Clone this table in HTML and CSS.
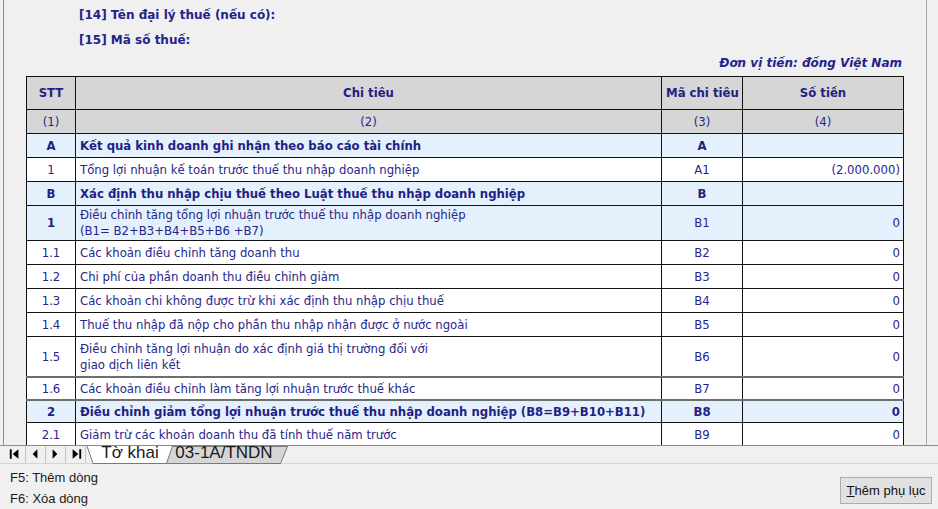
FILE: index.html
```html
<!DOCTYPE html>
<html lang="vi">
<head>
<meta charset="utf-8">
<title>03-1A/TNDN</title>
<link rel="stylesheet" href="styles.css">
</head>
<body>
<div class="app">
  <div class="pane">
    <div class="content">
      <div class="info">
        <div class="info-line">[14] Tên đại lý thuế (nếu có):</div>
        <div class="info-line">[15] Mã số thuế:</div>
      </div>
      <div class="unit">Đơn vị tiền: đồng Việt Nam</div>
      <table class="sheet">
        <colgroup>
          <col class="c-stt"><col class="c-name"><col class="c-code"><col class="c-val">
        </colgroup>
        <tr class="r-head">
          <th>STT</th><th>Chi tiêu</th><th>Mã chi tiêu</th><th>Số tiền</th>
        </tr>
        <tr class="r-idx">
          <td class="ctr">(1)</td><td class="ctr">(2)</td><td class="ctr">(3)</td><td class="ctr">(4)</td>
        </tr>
        <tr class="r-sec bold">
          <td class="ctr">A</td><td>Kết quả kinh doanh ghi nhận theo báo cáo tài chính</td><td class="ctr">A</td><td class="num"></td>
        </tr>
        <tr>
          <td class="ctr">1</td><td>Tổng lợi nhuận kế toán trước thuế thu nhập doanh nghiệp</td><td class="ctr">A1</td><td class="num">(2.000.000)</td>
        </tr>
        <tr class="r-sec bold">
          <td class="ctr">B</td><td>Xác định thu nhập chịu thuế theo Luật thuế thu nhập doanh nghiệp</td><td class="ctr">B</td><td class="num"></td>
        </tr>
        <tr class="r-sec r-two">
          <td class="ctr b">1</td><td class="wrap">Điều chỉnh tăng tổng lợi nhuận trước thuế thu nhập doanh nghiệp<br>(B1= B2+B3+B4+B5+B6 +B7)</td><td class="ctr">B1</td><td class="num">0</td>
        </tr>
        <tr>
          <td class="ctr">1.1</td><td>Các khoản điều chỉnh tăng doanh thu</td><td class="ctr">B2</td><td class="num">0</td>
        </tr>
        <tr>
          <td class="ctr">1.2</td><td>Chi phí của phần doanh thu điều chỉnh giảm</td><td class="ctr">B3</td><td class="num">0</td>
        </tr>
        <tr>
          <td class="ctr">1.3</td><td>Các khoản chi không được trừ khi xác định thu nhập chịu thuế</td><td class="ctr">B4</td><td class="num">0</td>
        </tr>
        <tr>
          <td class="ctr">1.4</td><td>Thuế thu nhập đã nộp cho phần thu nhập nhận được ở nước ngoài</td><td class="ctr">B5</td><td class="num">0</td>
        </tr>
        <tr class="r-three">
          <td class="ctr">1.5</td><td class="wrap">Điều chỉnh tăng lợi nhuận do xác định giá thị trường đối với<br>giao dịch liên kết</td><td class="ctr">B6</td><td class="num">0</td>
        </tr>
        <tr class="r-thin r-gray">
          <td class="ctr">1.6</td><td>Các khoản điều chỉnh làm tăng lợi nhuận trước thuế khác</td><td class="ctr">B7</td><td class="num">0</td>
        </tr>
        <tr class="r-sec bold r-thin r-gray">
          <td class="ctr">2</td><td>Điều chỉnh giảm tổng lợi nhuận trước thuế thu nhập doanh nghiệp (B8=B9+B10+B11)</td><td class="ctr">B8</td><td class="num">0</td>
        </tr>
        <tr>
          <td class="ctr">2.1</td><td>Giảm trừ các khoản doanh thu đã tính thuế năm trước</td><td class="ctr">B9</td><td class="num">0</td>
        </tr>
      </table>
    </div>
  </div>

  <div class="tabbar">
    <div class="nav">
      <span class="nav-btn"><svg width="20" height="17" viewBox="0 0 20 17"><rect x="4" y="3" width="2" height="10" fill="#000"/><polygon points="13,3 13,13 7,8" fill="#000"/></svg></span>
      <span class="nav-btn"><svg width="20" height="17" viewBox="0 0 20 17"><polygon points="12,3 12,13 7,8" fill="#000"/></svg></span>
      <span class="nav-btn"><svg width="20" height="17" viewBox="0 0 20 17"><polygon points="7,3 7,13 12,8" fill="#000"/></svg></span>
      <span class="nav-btn"><svg width="20" height="17" viewBox="0 0 20 17"><polygon points="7,3 7,13 13,8" fill="#000"/><rect x="14" y="3" width="2" height="10" fill="#000"/></svg></span>
    </div>
    <div class="tabs">
      <div class="tab tab-active">
        <svg class="tab-shape" width="86" height="18" viewBox="0 0 86 18"><polygon points="0,0 85.5,0 79.5,17.5 6,17.5" fill="#ffffff"/><polyline points="0,0 6,17.5 79.5,17.5 85.5,0" fill="none" stroke="#7a7a7a" stroke-width="1"/></svg>
        <span class="tab-label">Tờ khai</span>
      </div>
      <div class="tab tab-idle">
        <svg class="tab-shape" width="128" height="18" viewBox="0 0 128 18"><polygon points="0,0.5 127.5,0.5 120.5,17.5 6.5,17.5" fill="#d6d6d6" stroke="#7a7a7a" stroke-width="1"/></svg>
        <span class="tab-label">03-1A/TNDN</span>
      </div>
    </div>
  </div>

  <div class="footer">
    <div class="hints">
      <div>F5: Thêm dòng</div>
      <div>F6: Xóa dòng</div>
    </div>
    <button class="btn" type="button"><u>T</u>hêm phụ lục</button>
  </div>
</div>
</body>
</html>
```

FILE: styles.css
```css
html, body {
  margin: 0;
  padding: 0;
  background: #f0f0f0;
}

.app {
  width: 938px;
  height: 509px;
  overflow: hidden;
  background: #f0f0f0;
  font-family: "DejaVu Sans", Verdana, sans-serif;
}

.pane {
  box-sizing: border-box;
  margin-left: 3px;
  width: 924px;
  height: 445px;
  border-left: 1px solid #8c8c8c;
  border-right: 1px solid #a8a8a8;
  overflow: hidden;
}

.content {
  width: 877px;
  margin-left: 22px;
}

.info {
  padding-top: 3px;
  padding-left: 53px;
}

.info-line {
  font-size: 12px;
  font-weight: bold;
  line-height: 25px;
  color: #23238a;
}

.unit {
  margin-top: 1px;
  font-size: 12px;
  line-height: 18px;
  font-weight: bold;
  font-style: italic;
  color: #23238a;
  text-align: right;
  padding-right: 1px;
}

.sheet {
  margin-top: 4px;
  border-collapse: collapse;
  table-layout: fixed;
  width: 877px;
  font-size: 11.7px;
  color: #26268a;
}

.c-stt { width: 49px; }
.c-name { width: 586px; }
.c-code { width: 81px; }
.c-val { width: 161px; }

.sheet th,
.sheet td {
  border: 1px solid #111;
  padding: 0 4px;
  height: 23px;
  white-space: nowrap;
  overflow: hidden;
  text-align: left;
  vertical-align: middle;
  background: #ffffff;
}

.sheet th {
  height: 32px;
  text-align: center;
  font-weight: bold;
  background: #d6d6d6;
  color: #1f1f84;
}

.r-idx td {
  background: #d6d6d6;
}

.r-sec td {
  background: #e4f0fb;
}

.bold td,
.sheet td.b {
  font-weight: bold;
  color: #1f1f84;
}

.sheet td.ctr {
  text-align: center;
}

.sheet td.num {
  text-align: right;
  padding-right: 3px;
}

.sheet td.wrap {
  line-height: 16px;
}

.r-two td {
  height: 34px;
}

.r-three td {
  height: 39px;
}

.r-thin td {
  height: 21px;
}

.r-gray td {
  border-top: 2px solid #6e6e6e;
}

/* tab strip */
.tabbar {
  display: flex;
  height: 17px;
  border-top: 1px solid #8a8a8a;
  border-bottom: 1px solid #d4d4d4;
  background: #f0f0f0;
}

.nav {
  display: flex;
  margin-left: 6px;
}

.nav-btn {
  display: flex;
  width: 20px;
  height: 17px;
  border-right: 1px solid #c4c4c4;
  box-sizing: border-box;
}

.tabs {
  display: flex;
  margin-left: 1px;
}

.tab {
  position: relative;
  height: 17px;
  display: flex;
  justify-content: center;
  font-family: "Liberation Sans", Arial, sans-serif;
  font-size: 17px;
  line-height: 17px;
  color: #1a1a1a;
}

.tab-shape {
  position: absolute;
  left: 0;
  top: 0;
}

.tab-label {
  position: relative;
  top: -2px;
}

.tab-active {
  width: 86px;
  z-index: 2;
}

.tab-idle {
  width: 128px;
  margin-left: -13px;
  z-index: 1;
}

/* footer */
.footer {
  display: flex;
  justify-content: space-between;
  align-items: flex-start;
  height: 45px;
  font-family: "Liberation Sans", Arial, sans-serif;
  font-size: 13px;
  color: #1a1a1a;
}

.hints {
  padding-top: 3px;
  padding-left: 10px;
  line-height: 21px;
}

.btn {
  margin-top: 13px;
  margin-right: 6px;
  width: 92px;
  height: 27px;
  padding: 0;
  border: 1px solid #adadad;
  background: #e1e1e1;
  font-family: "Liberation Sans", Arial, sans-serif;
  font-size: 13px;
  color: #111;
}
```
